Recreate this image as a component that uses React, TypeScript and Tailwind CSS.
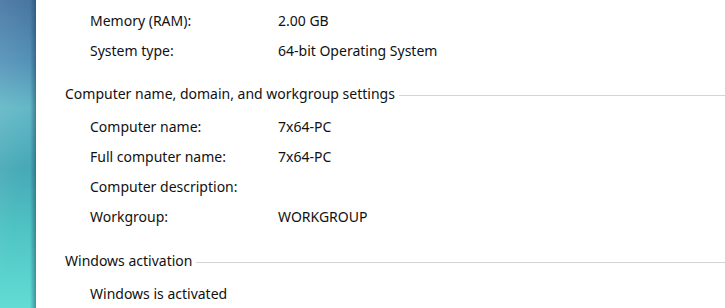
import React from "react";

const font = { fontFamily: '"Noto Sans", "Open Sans", sans-serif' };

function Row({ label, value }: { label: string; value?: string }) {
  return (
    <div className="flex h-[30px] items-center pl-[54px] text-[14px] text-[#111]">
      <div className="w-[188px] shrink-0">{label}</div>
      <div>{value}</div>
    </div>
  );
}

function Heading({ text }: { text: string }) {
  return (
    <div className="flex h-[30px] items-center pl-[29px] text-[14px] text-[#111]">
      <span className="shrink-0">{text}</span>
      <div className="ml-[4px] mt-[4px] h-px flex-1 bg-[#d4d4d4]" />
    </div>
  );
}

export default function App() {
  return (
    <div className="flex h-[308px] w-[725px] overflow-hidden bg-white" style={font}>
      <div className="relative h-full w-[36px] shrink-0 overflow-hidden bg-[linear-gradient(180deg,#3c6d9c_0%,#4f8fb5_20%,#62b7c6_35%,#47a9b6_55%,#4fc4c4_75%,#62dcd4_100%)]">
        <div className="absolute inset-0 bg-[linear-gradient(100deg,rgba(255,255,255,0.12)_0%,rgba(255,255,255,0)_60%)]" />
        <div className="absolute right-0 top-0 h-full w-[6px] bg-[linear-gradient(90deg,rgba(20,60,90,0)_0%,rgba(20,60,90,0.45)_100%)]" />
      </div>
      <div className="-mt-[24px] flex flex-1 flex-col">
        <Row label="" value="Intel(R) Core(TM)2 (approx.)" />
        <Row label="Memory (RAM):" value="2.00 GB" />
        <Row label="System type:" value="64-bit Operating System" />
        <div className="mt-[13px]">
          <Heading text="Computer name, domain, and workgroup settings" />
        </div>
        <div className="mt-[3px]">
          <Row label="Computer name:" value="7x64-PC" />
          <Row label="Full computer name:" value="7x64-PC" />
          <Row label="Computer description:" />
          <Row label="Workgroup:" value="WORKGROUP" />
        </div>
        <div className="mt-[14px]">
          <Heading text="Windows activation" />
        </div>
        <div className="mt-[3px]">
          <Row label="Windows is activated" />
        </div>
      </div>
    </div>
  );
}
